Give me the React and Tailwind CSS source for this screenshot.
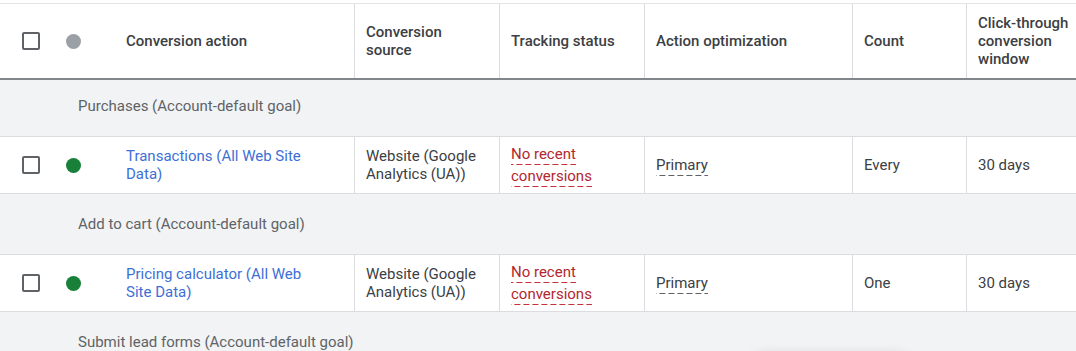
import React from 'react';

const cols = 'grid grid-cols-[116px_239px_145px_145px_208px_114px_140px]';

const Checkbox = () => (
    <div className="w-[18px] h-[18px] border-2 border-[#5f6368] rounded-[2px] bg-white shrink-0" />
);

const Dot = ({ color }) => <div className={`w-[15px] h-[15px] rounded-full ${color}`} />;

const Dashed = ({ children, red }) => (
    <span
        className={
            red
                ? 'pb-[2px] bg-[linear-gradient(to_right,#c5303a_66%,transparent_0)] bg-[length:9px_1.5px] bg-repeat-x bg-bottom'
                : 'pb-[2px] bg-[linear-gradient(to_right,#5f6368_66%,transparent_0)] bg-[length:9px_1.5px] bg-repeat-x bg-bottom'
        }
    >
        {children}
    </span>
);

const rows = [
    {
        group: 'Purchases (Account-default goal)',
        name: 'Transactions (All Web Site Data)',
        count: 'Every',
    },
    {
        group: 'Add to cart (Account-default goal)',
        name: 'Pricing calculator (All Web Site Data)',
        count: 'One',
    },
];

const DataRow = ({ row }) => (
    <div className={`${cols} h-[58px] bg-white border-y border-[#dadce0] text-[15px] leading-[18px] text-[#3c4043]`}>
        <div className="flex items-center pl-[22px] gap-[26px]">
            <Checkbox />
            <Dot color="bg-[#188038]" />
        </div>
        <div className="flex items-center pl-[10px] pr-[44px] border-r border-[#dadce0] text-[#3d6fd6]">
            {row.name}
        </div>
        <div className="flex items-center px-[11px] border-r border-[#dadce0]">Website (Google Analytics (UA))</div>
        <div className="flex items-center px-[11px] pr-[20px] border-r border-[#dadce0] text-[#b3262e] leading-[22px]">
            <div>
                <Dashed red>No recent conversions</Dashed>
            </div>
        </div>
        <div className="flex items-center px-[11px] border-r border-[#dadce0]">
            <div>
                <Dashed>Primary</Dashed>
            </div>
        </div>
        <div className="flex items-center px-[11px] border-r border-[#dadce0]">{row.count}</div>
        <div className="flex items-center px-[11px]">30 days</div>
    </div>
);

const GroupRow = ({ label, className }) => (
    <div className={`flex items-center pl-[78px] bg-[#f1f3f4] text-[15px] text-[#5f6368] ${className}`}>
        {label}
    </div>
);

export default function App() {
    return (
        <div className="relative w-[1076px] h-[351px] overflow-hidden bg-[#f1f3f4] font-['Roboto',sans-serif]">
            <div className="h-[3px] bg-white" />
            <div className={`${cols} h-[77px] bg-white border-t border-[#e3e3e3] border-b-2 border-b-[#80868b] text-[15px] leading-[18px] font-medium text-[#3c4043]`}>
                <div className="flex items-center pl-[22px] gap-[26px]">
                    <Checkbox />
                    <Dot color="bg-[#9aa0a6]" />
                </div>
                <div className="flex items-center pl-[10px] border-r border-[#dadce0]">Conversion action</div>
                <div className="flex items-center pl-[11px] pr-4 border-r border-[#dadce0]">Conversion source</div>
                <div className="flex items-center pl-[11px] pr-4 border-r border-[#dadce0]">Tracking status</div>
                <div className="flex items-center pl-[11px] border-r border-[#dadce0]">Action optimization</div>
                <div className="flex items-center pl-[11px] border-r border-[#dadce0]">Count</div>
                <div className="flex items-center pl-[11px]">
                    <div className="max-w-[100px]">Click-through conversion window</div>
                </div>
            </div>

            <GroupRow label={rows[0].group} className="h-[56px] pb-1" />
            <DataRow row={rows[0]} />
            <GroupRow label={rows[1].group} className="h-[60px]" />
            <DataRow row={rows[1]} />
            <GroupRow label="Submit lead forms (Account-default goal)" className="h-[60px]" />

            <div className="absolute left-[748px] top-[356px] w-[166px] h-[40px] rounded-full bg-white shadow-[0_0_14px_rgba(0,0,0,0.18)]" />
        </div>
    );
}
